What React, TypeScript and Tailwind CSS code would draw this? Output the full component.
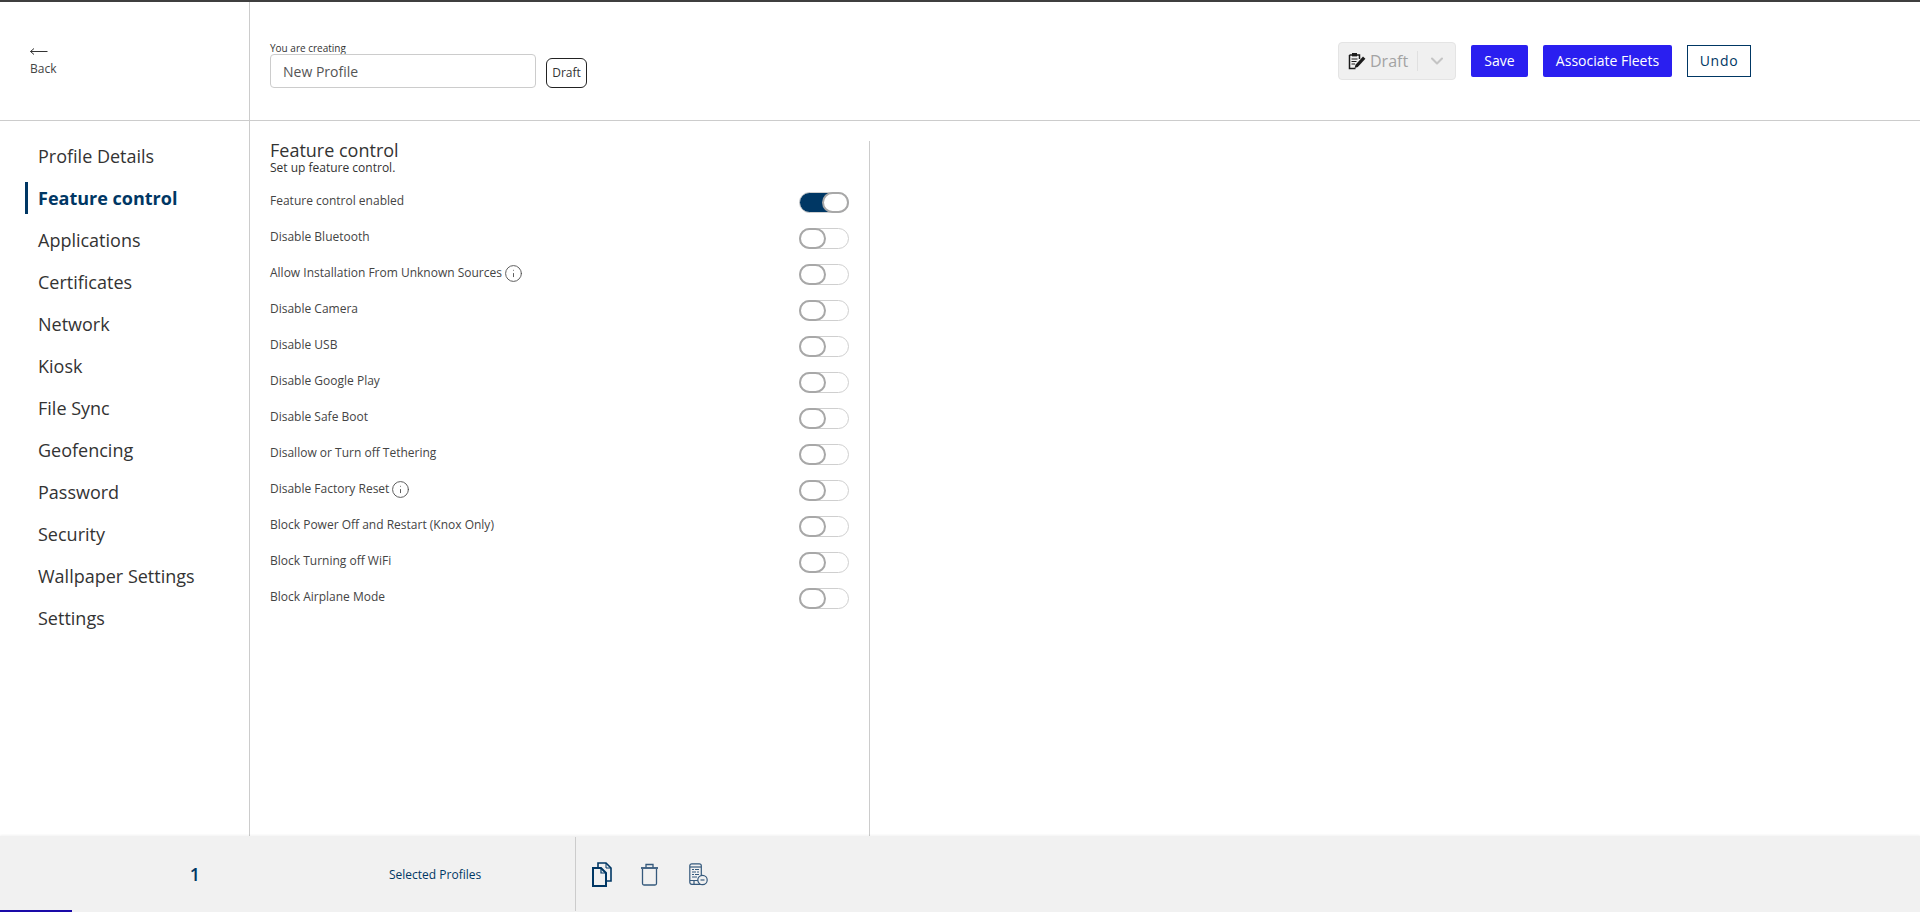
import React from 'react';
import { ChevronDown, Info } from 'lucide-react';

const navItems = [
    'Profile Details',
    'Feature control',
    'Applications',
    'Certificates',
    'Network',
    'Kiosk',
    'File Sync',
    'Geofencing',
    'Password',
    'Security',
    'Wallpaper Settings',
    'Settings',
];

const features = [
    { label: 'Feature control enabled', on: true },
    { label: 'Disable Bluetooth' },
    { label: 'Allow Installation From Unknown Sources', info: true },
    { label: 'Disable Camera' },
    { label: 'Disable USB' },
    { label: 'Disable Google Play' },
    { label: 'Disable Safe Boot' },
    { label: 'Disallow or Turn off Tethering' },
    { label: 'Disable Factory Reset', info: true },
    { label: 'Block Power Off and Restart (Knox Only)' },
    { label: 'Block Turning off WiFi' },
    { label: 'Block Airplane Mode' },
];

function Toggle({ on }: { on?: boolean }) {
    return (
        <div className={`relative mt-[4px] h-[21px] w-[50px] rounded-full border border-[#cfcfcf] ${on ? 'bg-[#003764]' : 'bg-white'}`}>
            <div className={`absolute top-[-1px] h-[21px] w-[27px] rounded-full border-2 border-[#a8a8a8] bg-white ${on ? 'right-[-1px]' : 'left-[-1px]'}`} />
        </div>
    );
}

function CopyIcon() {
    return (
        <svg width="21" height="25" viewBox="0 0 21 25" fill="none" stroke="#003764" strokeWidth="1.6">
            <path d="M6 5V1h8l5 5v13h-5" />
            <path d="M14 1v5h5" strokeWidth="1" />
            <path d="M1 6h8l5 5v13H1z" fill="#f1f1f1" strokeWidth="2" />
            <path d="M9 6v5h5" strokeWidth="1.2" />
        </svg>
    );
}

function TrashIcon() {
    return (
        <svg width="19" height="23" viewBox="0 0 19 23" fill="none" stroke="#35597c" strokeWidth="1.3">
            <path d="M1 5h17" strokeWidth="1.8" />
            <path d="M6 4.5V1.5h7v3" />
            <path d="M2.5 6v14.5A1.5 1.5 0 0 0 4 22h11a1.5 1.5 0 0 0 1.5-1.5V6" />
        </svg>
    );
}

function DeviceIcon() {
    return (
        <svg width="19" height="23" viewBox="0 0 19 23" fill="none" stroke="#35597c" strokeWidth="1.2">
            <rect x="0.8" y="0.8" width="11.5" height="20.5" rx="2" />
            <path d="M1 4h11" />
            <path d="M3 6.5h2M6 6.5h4M3 9h4M8 9h2M3 11.5h2M6 11.5h4M3 14h5" strokeWidth="1" />
            <path d="M1 17.5h9M5 17.5v4" />
            <circle cx="13.5" cy="17" r="4.7" fill="#f1f1f1" />
            <path d="M11.5 17h4" />
        </svg>
    );
}

function DraftIcon() {
    return (
        <svg width="18" height="18" viewBox="0 0 18 18" className="shrink-0">
            <path d="M1.5 3h10v4M1.5 3v13.5h6" fill="none" stroke="#1c1c1c" strokeWidth="1.5" />
            <rect x="4" y="1" width="5" height="3.4" fill="#1c1c1c" />
            <path d="M3.5 7h6M3.5 9.5h5M3.5 12h3.5" stroke="#1c1c1c" strokeWidth="1.1" />
            <path d="M15 4.5l2.4 2.2-7.6 8.4-3.2 1 .9-3.3z" fill="#1c1c1c" />
        </svg>
    );
}

export default function App() {
    return (
        <div className="flex h-[912px] w-full flex-col overflow-hidden border-t-2 border-[#3f3f3f] bg-white font-['Open_Sans',sans-serif] text-[#333]">
            {/* Top bar */}
            <header className="flex h-[119px] shrink-0 border-b border-[#cccccc]">
                <div className="flex w-[250px] shrink-0 flex-col border-r border-[#cccccc] pl-[30px] pt-[45px]">
                    <svg width="18" height="9" viewBox="0 0 18 9" fill="none" stroke="#333" strokeWidth="1">
                        <path d="M0.5 4.5h17M4 1.5l-3.5 3 3.5 3" />
                    </svg>
                    <span className="mt-[3px] text-xs leading-[20px] text-[#444]">Back</span>
                </div>
                <div className="flex flex-1 justify-between">
                    <div className="flex pl-5 pt-[40px]">
                        <div className="flex flex-col">
                            <span className="h-[12px] text-[10px] leading-[12px] text-[#333]">You are creating</span>
                            <div className="flex h-[34px] w-[266px] items-center rounded border border-[#cccccc] pl-[12px] pt-px text-sm text-[#555]">
                                New Profile
                            </div>
                        </div>
                        <div className="ml-[10px] mt-[16px] flex h-[30px] w-[41px] items-center justify-center rounded-md border border-[#222] text-xs text-[#333]">
                            Draft
                        </div>
                    </div>
                    <div className="mr-[169px] flex items-start pt-[40px]">
                        <div className="flex h-[38px] w-[118px] items-center rounded border border-[#e4e4e4] bg-[#f0f0f0] pl-[9px]">
                            <DraftIcon />
                            <span className="ml-1 text-base text-[#a3a3a3]">Draft</span>
                            <div className="ml-[9px] h-5 w-px bg-[#e0e0e0]" />
                            <ChevronDown className="ml-[9px] text-[#c4c4c4]" size={20} strokeWidth={2.5} />
                        </div>
                        <button className="ml-[15px] mt-[3px] h-[32px] w-[57px] rounded-[2px] bg-[#2a1ff0] text-sm text-white">Save</button>
                        <button className="ml-[15px] mt-[3px] h-[32px] w-[129px] rounded-[2px] bg-[#2a1ff0] text-sm text-white">Associate Fleets</button>
                        <button className="ml-[15px] mt-[3px] h-[32px] w-[64px] border border-[#003764] text-sm tracking-wider text-[#003764]">Undo</button>
                    </div>
                </div>
            </header>

            <div className="flex min-h-0 flex-1">
                {/* Sidebar */}
                <nav className="w-[250px] shrink-0 border-r border-[#cccccc] pl-[25px] pt-[14px]">
                    {navItems.map((item) => {
                        const active = item === 'Feature control';
                        return (
                            <div
                                key={item}
                                className={`flex h-[42px] items-center text-lg ${active ? 'font-bold text-[#003764]' : 'text-[#333]'}`}
                            >
                                <div className={`flex h-8 items-center border-l-[3px] pl-[10px] ${active ? 'border-[#003764]' : 'border-transparent'}`}>
                                    {item}
                                </div>
                            </div>
                        );
                    })}
                </nav>

                {/* Feature list */}
                <main className="flex-1 pl-5 pt-5">
                    <section className="h-full w-[600px] border-r border-[#cccccc] pr-5">
                        <h2 className="text-lg leading-[18px] text-[#333]">Feature control</h2>
                        <p className="mt-[2px] text-xs leading-[14px] text-[#333]">Set up feature control.</p>
                        <div className="mt-[13px] flex flex-col">
                            {features.map((f) => (
                                <div key={f.label} className="flex h-[36px] items-start justify-between">
                                    <div className="flex h-[26px] items-center text-xs text-[#444]">
                                        {f.label}
                                        {f.info && <Info className="ml-[2px] text-[#555]" size={19} strokeWidth={1.2} />}
                                    </div>
                                    <Toggle on={f.on} />
                                </div>
                            ))}
                        </div>
                    </section>
                </main>
            </div>

            {/* Selection footer */}
            <footer className="relative flex h-[76px] shrink-0 items-center bg-[#f1f1f1] shadow-[0_-1px_2px_rgba(0,0,0,0.05)]">
                <span className="flex w-[389px] justify-center pl-[1px] text-lg font-semibold text-[#003764]">1</span>
                <span className="w-[186px] pt-px text-xs text-[#003764]">Selected Profiles</span>
                <div className="flex h-[74px] items-center border-l border-[#cccccc] pl-[16px]">
                    <CopyIcon />
                    <div className="ml-[27px]"><TrashIcon /></div>
                    <div className="ml-[30px]"><DeviceIcon /></div>
                </div>
                <div className="absolute bottom-0 left-0 h-[2px] w-[72px] bg-[#1a0aa8]" />
            </footer>
        </div>
    );
}
